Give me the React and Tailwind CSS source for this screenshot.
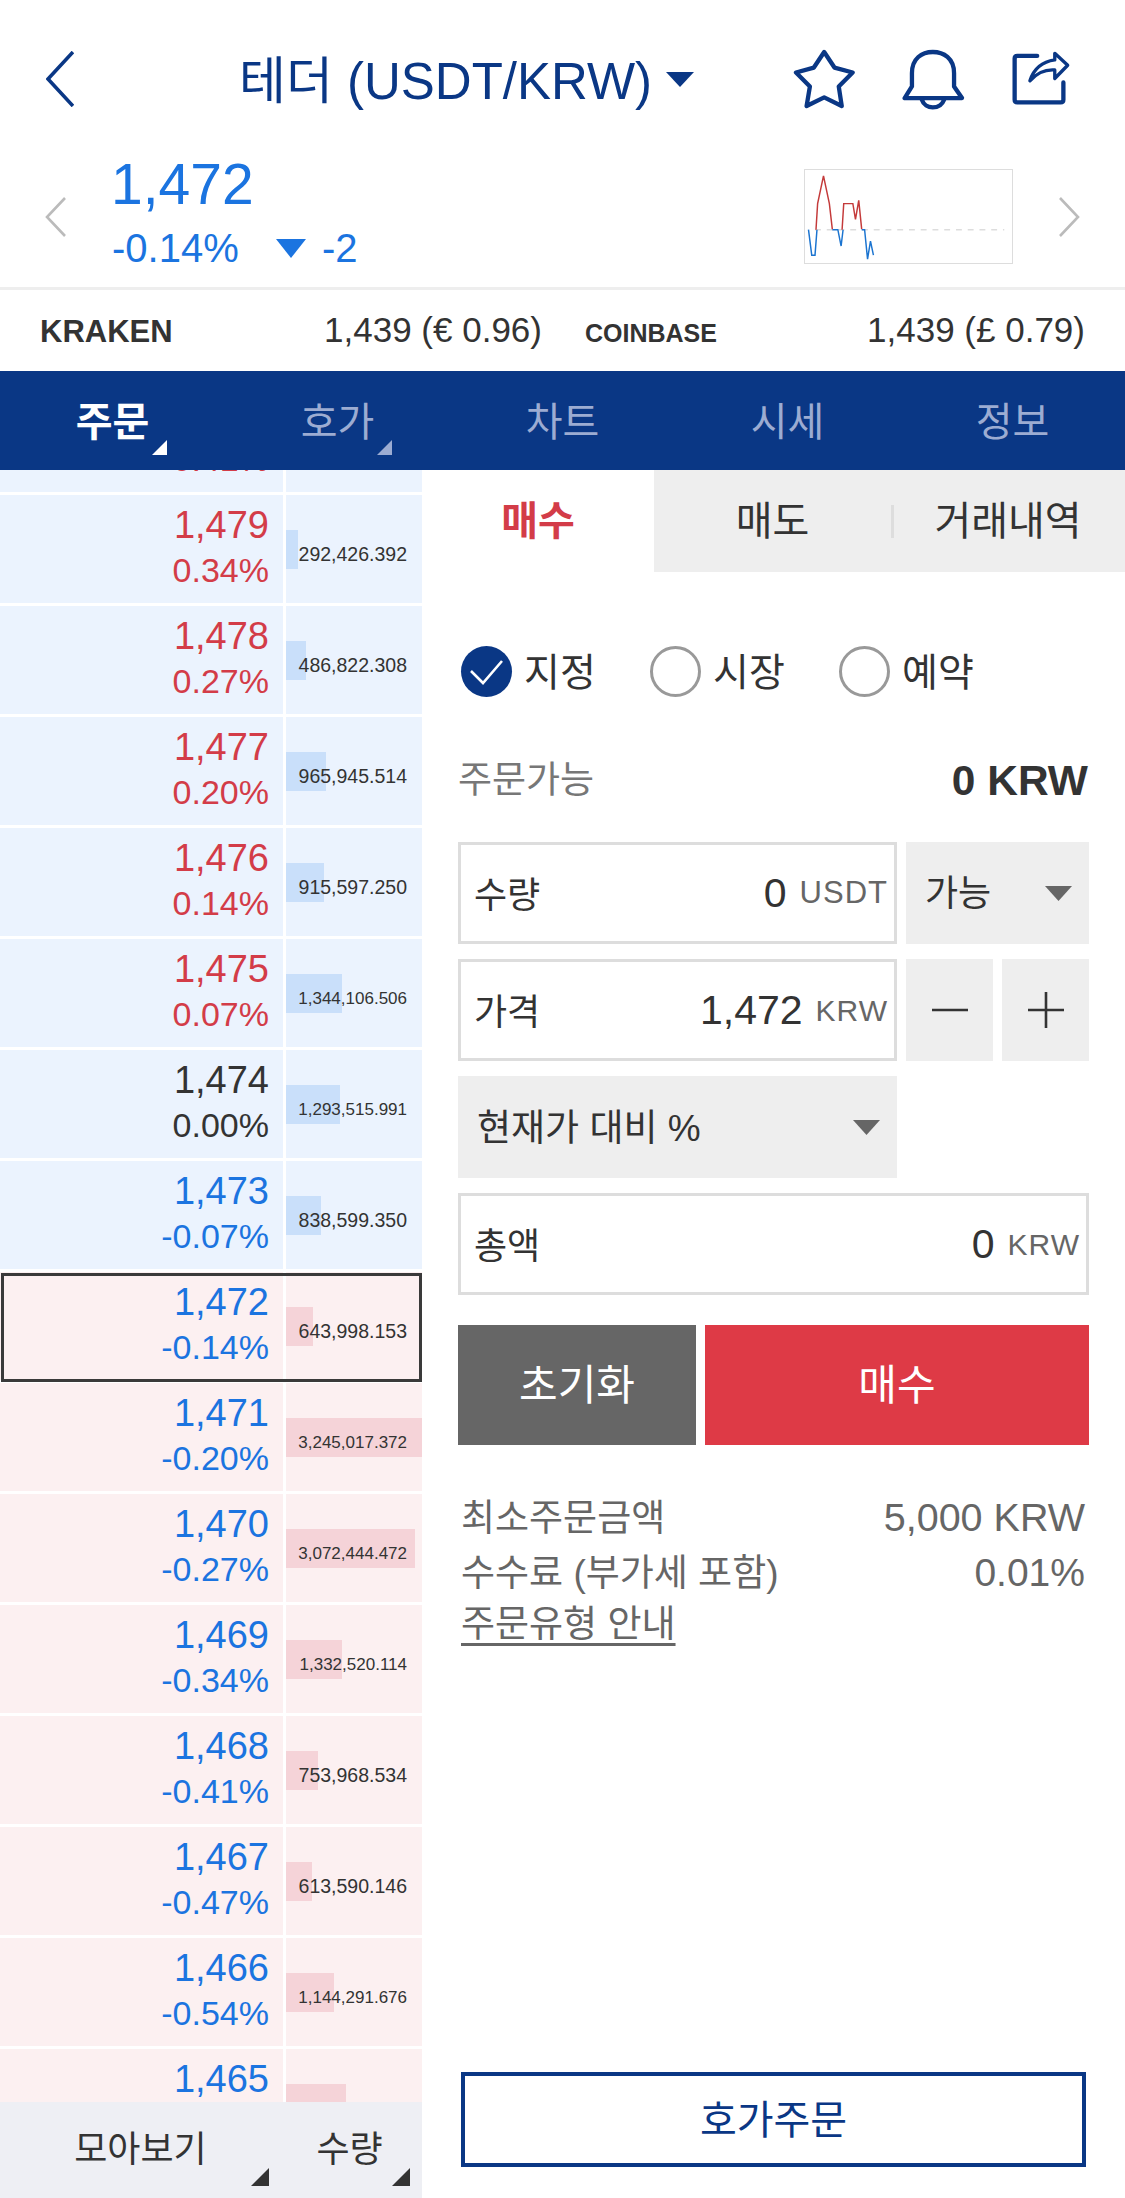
import React from "react";

const rows = [
  ["1,480", "0.41%", "red", "blue", "", 0],
  ["1,479", "0.34%", "red", "blue", "292,426.392", 12],
  ["1,478", "0.27%", "red", "blue", "486,822.308", 20],
  ["1,477", "0.20%", "red", "blue", "965,945.514", 40],
  ["1,476", "0.14%", "red", "blue", "915,597.250", 38],
  ["1,475", "0.07%", "red", "blue", "1,344,106.506", 56],
  ["1,474", "0.00%", "black", "blue", "1,293,515.991", 54],
  ["1,473", "-0.07%", "sky", "blue", "838,599.350", 35],
  ["1,472", "-0.14%", "sky", "pink", "643,998.153", 27, true],
  ["1,471", "-0.20%", "sky", "pink", "3,245,017.372", 136],
  ["1,470", "-0.27%", "sky", "pink", "3,072,444.472", 129],
  ["1,469", "-0.34%", "sky", "pink", "1,332,520.114", 56],
  ["1,468", "-0.41%", "sky", "pink", "753,968.534", 32],
  ["1,467", "-0.47%", "sky", "pink", "613,590.146", 26],
  ["1,466", "-0.54%", "sky", "pink", "1,144,291.676", 48],
  ["1,465", "-0.61%", "sky", "pink", "", 60],
];

const textColor = { red: "text-[#d33c48]", black: "text-[#333333]", sky: "text-[#1b74e0]" };

function Corner({ className }) {
  return (
    <svg viewBox="0 0 16 16" className={className} fill="currentColor">
      <polygon points="16,0 16,16 0,16" />
    </svg>
  );
}

function Row({ r }) {
  const [price, pct, color, bg, vol, bar, current] = r;
  const bgc = bg === "blue" ? "bg-[#ebf3fe]" : "bg-[#fcf0f1]";
  const barc = bg === "blue" ? "bg-[#c9dffa]" : "bg-[#f5d3d8]";
  const long = vol.length > 11;
  return (
    <div className="relative flex h-[108px] gap-[3px] shrink-0">
      <div className={`w-[283px] pt-[8px] pr-[14px] text-right ${bgc} ${textColor[color]}`}>
        <div className="text-[38px] leading-[45px]">{price}</div>
        <div className="text-[34px] leading-[45px]">{pct}</div>
      </div>
      <div className={`relative w-[136px] ${bgc}`}>
        <div className={`absolute left-0 top-[35px] h-[39px] ${barc}`} style={{ width: bar }} />
        <div className={`relative pt-[47px] pr-[15px] text-right text-[#333333] leading-[25px] ${long ? "text-[17px]" : "text-[19.5px]"}`}>
          {vol}
        </div>
      </div>
      {current && <div className="absolute left-[1px] right-0 top-[1px] bottom-[-2px] border-[3px] border-[#3a3a3a]" />}
    </div>
  );
}

function Radio({ on, label, w }) {
  return (
    <div className={`flex items-center h-[51px] ${w}`}>
      {on ? (
        <div className="w-[51px] h-[51px] rounded-full bg-[#0a3785] flex items-center justify-center">
          <svg viewBox="0 0 51 51" className="w-[51px] h-[51px]" fill="none" stroke="#fff" strokeWidth="2.6">
            <path d="M10 25 L22 37 L41 15" />
          </svg>
        </div>
      ) : (
        <div className="w-[51px] h-[51px] rounded-full border-[3px] border-[#999999]" />
      )}
      <span className="ml-[12px] pt-[2px] text-[39px] leading-[51px] text-[#333333]">{label}</span>
    </div>
  );
}

function Field({ label, value, unit, unitClass, className }) {
  return (
    <div className={`h-[102px] border-[3px] border-[#dddddd] flex items-center pl-[13px] pr-[6px] ${className}`}>
      <span className="pt-[5px] text-[36px] text-[#333333]">{label}</span>
      <span className="ml-auto pt-[1px] text-[41px] text-[#333333]">{value}</span>
      <span className={`ml-[13px] text-[#666666] tracking-[1px] ${unitClass}`}>{unit}</span>
    </div>
  );
}

function Tri({ className }) {
  return (
    <svg viewBox="0 0 27 15" className={className} fill="#666666">
      <polygon points="0,0 27,0 13.5,15" />
    </svg>
  );
}

function Spark() {
  return (
    <svg viewBox="73 57 627 285" className="w-[209px] h-[95px] border-[1.5px] border-[#dddddd] block" fill="none" strokeWidth="4.5">
      <path d="M100 240 H680" stroke="#dddddd" strokeDasharray="18 18" />
      <path d="M80 240 L90 318 L100 318 L106 240 M153 240 L170 240 L180 290 L186 240 M243 240 L252 240 L261 330 L270 275 L279 318" stroke="#1b74d0" />
      <path d="M103 240 L108 160 L126 75 L144 160 L153 238 M183 240 L188 160 L216 160 L224 208 L234 150 L243 238" stroke="#c43a3a" />
    </svg>
  );
}

export default function App() {
  return (
    <div className="w-[1125px] h-[2198px] overflow-hidden bg-white flex flex-col font-['Liberation_Sans','Noto_Sans_CJK_KR',sans-serif]">
      {/* header */}
      <div className="h-[160px] flex items-center pl-[46px] pb-[2px] text-[#0a3785] shrink-0">
        <svg viewBox="0 0 28 56" className="w-[28px] h-[56px]" fill="none" stroke="#0a3785" strokeWidth="3.6">
          <path d="M27 1 L2 28 L27 55" />
        </svg>
        <span className="ml-[165px] pt-[5px] text-[51px] leading-[60px] w-[411px] whitespace-nowrap">테더 (USDT/KRW)</span>
        <svg viewBox="0 0 28 15" className="ml-[16px] w-[28px] h-[15px]" fill="#0a3785">
          <polygon points="0,0 28,0 14,15" />
        </svg>
        <svg viewBox="40 55 190 185" className="ml-[99px] w-[63px] h-[62px]" fill="none" stroke="#0a3785" strokeWidth="13" strokeLinejoin="round">
          <path d="M134 66 L165 113 L220 128 L178 170 L187 229 L134 203 L81 229 L91 170 L49 128 L103 113 Z" />
        </svg>
        <svg viewBox="365 55 190 185" className="ml-[46px] w-[63px] h-[62px]" fill="none" stroke="#0a3785" strokeWidth="13" strokeLinejoin="round" strokeLinecap="round">
          <path d="M373 205 H546 L522 170 V130 C522 85 490 66 458 66 C425 66 395 85 395 130 V170 Z" />
          <path d="M425 210 C435 241 480 241 492 210" />
        </svg>
        <svg viewBox="690 55 190 185" className="ml-[45px] w-[63px] h-[62px]" fill="none" stroke="#0a3785" strokeWidth="13" strokeLinejoin="round" strokeLinecap="round">
          <path d="M772 78 H712 Q704 78 704 86 V210 Q704 218 712 218 H843 Q851 218 851 210 V158" />
          <path d="M750 153 C762 116 790 95 825 90 V70 L864 106 L825 146 V120 C795 118 770 130 750 153 Z" strokeWidth="10" />
        </svg>
      </div>

      {/* price */}
      <div className="h-[127px] flex items-start pl-[45px] shrink-0">
        <svg viewBox="0 0 21 40" className="mt-[37px] w-[21px] h-[40px]" fill="none" stroke="#bbbbbb" strokeWidth="2.6">
          <path d="M20 1 L2 20 L20 39" />
        </svg>
        <div className="ml-[45px]">
          <div className="text-[57px] leading-[64px] text-[#1b74e0] mt-[-8px]">1,472</div>
          <div className="flex items-center mt-[12px] pl-[1px] text-[40px] leading-[41px] text-[#1b74e0]">
            <span className="w-[164px]">-0.14%</span>
            <svg viewBox="0 0 30 19" className="w-[30px] h-[19px]" fill="#1b74e0">
              <polygon points="0,0 30,0 15,19" />
            </svg>
            <span className="ml-[16px]">-2</span>
          </div>
        </div>
        <div className="ml-auto mt-[9px]">
          <Spark />
        </div>
        <svg viewBox="0 0 21 40" className="mt-[37px] ml-[46px] mr-[45px] w-[21px] h-[40px]" fill="none" stroke="#bbbbbb" strokeWidth="2.6">
          <path d="M1 1 L19 20 L1 39" />
        </svg>
      </div>

      {/* exchanges */}
      <div className="h-[84px] border-t-[3px] border-[#eeeeee] flex items-center pl-[40px] text-[#333333] shrink-0">
        <div className="w-[502px] flex items-baseline justify-between">
          <span className="text-[31px] font-bold">KRAKEN</span>
          <span className="text-[35px]">1,439 (€ 0.96)</span>
        </div>
        <div className="ml-[43px] w-[500px] flex items-baseline justify-between">
          <span className="text-[25px] font-bold">COINBASE</span>
          <span className="text-[35px]">1,439 (£ 0.79)</span>
        </div>
      </div>

      {/* tabs */}
      <div className="h-[99px] bg-[#0a3785] flex shrink-0">
        {["주문", "호가", "차트", "시세", "정보"].map((t, i) => (
          <div
            key={t}
            className={`relative w-[225px] flex items-center justify-center pt-[2px] text-[40px] ${i === 0 ? "text-white font-bold" : "text-[#9cacd2]"}`}
          >
            {t}
            {i < 2 && (
              <Corner className={`absolute left-[152px] top-[69px] w-[15px] h-[15px] ${i === 0 ? "text-white" : "text-[#9cacd2]"}`} />
            )}
          </div>
        ))}
      </div>

      {/* main */}
      <div className="flex-1 flex min-h-0">
        <div className="w-[422px] flex flex-col shrink-0">
          <div className="flex-1 overflow-hidden min-h-0">
            <div className="flex flex-col gap-[3px] mt-[-86px]">
              {rows.map((r) => (
                <Row key={r[0]} r={r} />
              ))}
            </div>
          </div>
          <div className="h-[96px] bg-[#eeeff4] flex text-[36px] text-[#333333] shrink-0">
            <div className="relative w-[281px] flex items-center justify-center">
              모아보기
              <Corner className="absolute left-[251px] top-[66px] w-[18px] h-[18px] text-[#333333]" />
            </div>
            <div className="relative flex-1 flex items-center justify-center pr-[4px]">
              수량
              <Corner className="absolute left-[111px] top-[66px] w-[18px] h-[18px] text-[#333333]" />
            </div>
          </div>
        </div>

        <div className="flex-1 flex flex-col">
          <div className="flex h-[102px] text-[40px] shrink-0">
            <div className="w-[232px] flex items-center justify-center font-bold text-[#d33c48]">매수</div>
            <div className="flex-1 flex items-center bg-[#eeeeee] text-[#333333]">
              <div className="w-[237px] text-center">매도</div>
              <div className="w-[3px] h-[33px] bg-[#dddddd]" />
              <div className="flex-1 text-center pr-[3px]">거래내역</div>
            </div>
          </div>

          <div className="pl-[36px] pr-[36px]">
            <div className="flex mt-[74px] pl-[3px]">
              <Radio on label="지정" w="w-[189px]" />
              <Radio label="시장" w="w-[189px]" />
              <Radio label="예약" />
            </div>
            <div className="flex items-center justify-between mt-[59px] h-[50px]">
              <span className="text-[37px] text-[#777777]">주문가능</span>
              <span className="text-[42.5px] font-bold text-[#333333] pr-[1px]">0 KRW</span>
            </div>

            <div className="flex flex-col gap-[15px] mt-[36px]">
              <div className="flex gap-[9px]">
                <Field label="수량" value="0" unit="USDT" unitClass="text-[31px]" className="w-[439px]" />
                <div className="flex-1 bg-[#eeeeee] flex items-center pl-[19px] pr-[17px]">
                  <span className="pt-[2px] text-[36px] text-[#333333]">가능</span>
                  <Tri className="ml-auto w-[27px] h-[15px]" />
                </div>
              </div>
              <div className="flex gap-[9px]">
                <Field label="가격" value="1,472" unit="KRW" unitClass="text-[30px]" className="w-[439px]" />
                <div className="flex-1 bg-[#eeeeee] flex items-center justify-center">
                  <svg viewBox="0 0 36 36" className="w-[36px] h-[36px]" stroke="#333333" strokeWidth="2.6">
                    <path d="M0 18 H36" />
                  </svg>
                </div>
                <div className="flex-1 bg-[#eeeeee] flex items-center justify-center">
                  <svg viewBox="0 0 36 36" className="w-[36px] h-[36px]" stroke="#333333" strokeWidth="2.6">
                    <path d="M0 18 H36 M18 0 V36" />
                  </svg>
                </div>
              </div>
              <div className="w-[439px] h-[102px] bg-[#eeeeee] flex items-center pl-[19px] pr-[17px]">
                <span className="pt-[4px] text-[37px] text-[#333333]">현재가 대비 %</span>
                <Tri className="ml-auto w-[27px] h-[15px]" />
              </div>
              <Field label="총액" value="0" unit="KRW" unitClass="text-[30px]" className="w-full" />
            </div>

            <div className="flex gap-[9px] mt-[30px] h-[120px] text-[42px] text-white">
              <div className="w-[238px] bg-[#666666] flex items-center justify-center">초기화</div>
              <div className="flex-1 bg-[#de3a46] flex items-center justify-center">매수</div>
            </div>

            <div className="mt-[45px] pl-[3px] pr-[4px] text-[37px] text-[#666666]">
              <div className="flex justify-between items-baseline leading-[54px]">
                <span>최소주문금액</span>
                <span className="text-[39.5px]">5,000 KRW</span>
              </div>
              <div className="flex justify-between items-baseline leading-[54px]">
                <span>수수료 (부가세 포함)</span>
                <span className="text-[39px]">0.01%</span>
              </div>
              <div className="leading-[47px] underline underline-offset-[6px]">주문유형 안내</div>
            </div>
          </div>

          <div className="mt-auto mb-[31px] mx-[39px] h-[95px] border-[4px] border-[#0a3785] flex items-center justify-center text-[40px] text-[#0a3785]">
            호가주문
          </div>
        </div>
      </div>
    </div>
  );
}
